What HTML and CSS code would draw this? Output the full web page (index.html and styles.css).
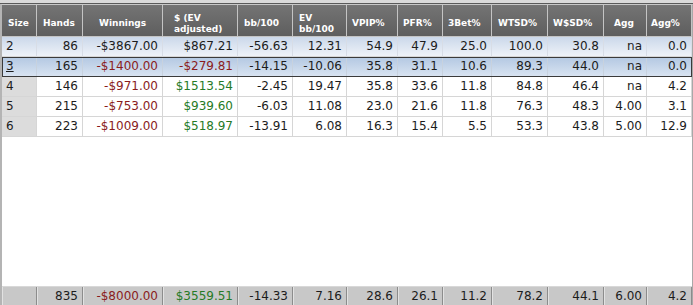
FILE: index.html
```html
<!DOCTYPE html>
<html>
<head>
<meta charset="utf-8">
<link rel="stylesheet" href="styles.css">
</head>
<body>
<div class="window">
  <div class="topbar"></div>
  <div class="grid">
    <div class="row head">
      <div class="h c-size">Size</div>
      <div class="h c-hands">Hands</div>
      <div class="h c-win">Winnings</div>
      <div class="h c-ev">$ (EV<br>adjusted)</div>
      <div class="h c-bb">bb/100</div>
      <div class="h c-evbb">EV<br>bb/100</div>
      <div class="h c-vpip">VPIP%</div>
      <div class="h c-pfr">PFR%</div>
      <div class="h c-3bet">3Bet%</div>
      <div class="h c-wtsd">WTSD%</div>
      <div class="h c-wsd">W$SD%</div>
      <div class="h c-agg">Agg</div>
      <div class="h c-aggp">Agg%</div>
    </div>
    <div class="row data sel">
      <div class="d size">2</div><div class="d">86</div><div class="d">-$3867.00</div><div class="d">$867.21</div><div class="d">-56.63</div><div class="d">12.31</div><div class="d">54.9</div><div class="d">47.9</div><div class="d">25.0</div><div class="d">100.0</div><div class="d">30.8</div><div class="d">na</div><div class="d">0.0</div>
    </div>
    <div class="row data focus">
      <div class="d size"><u>3</u></div><div class="d">165</div><div class="d neg">-$1400.00</div><div class="d neg">-$279.81</div><div class="d">-14.15</div><div class="d">-10.06</div><div class="d">35.8</div><div class="d">31.1</div><div class="d">10.6</div><div class="d">89.3</div><div class="d">44.0</div><div class="d">na</div><div class="d">0.0</div>
    </div>
    <div class="row data">
      <div class="d size">4</div><div class="d">146</div><div class="d neg">-$971.00</div><div class="d pos">$1513.54</div><div class="d">-2.45</div><div class="d">19.47</div><div class="d">35.8</div><div class="d">33.6</div><div class="d">11.8</div><div class="d">84.8</div><div class="d">46.4</div><div class="d">na</div><div class="d">4.2</div>
    </div>
    <div class="row data">
      <div class="d size">5</div><div class="d">215</div><div class="d neg">-$753.00</div><div class="d pos">$939.60</div><div class="d">-6.03</div><div class="d">11.08</div><div class="d">23.0</div><div class="d">21.6</div><div class="d">11.8</div><div class="d">76.3</div><div class="d">48.3</div><div class="d">4.00</div><div class="d">3.1</div>
    </div>
    <div class="row data">
      <div class="d size">6</div><div class="d">223</div><div class="d neg">-$1009.00</div><div class="d pos">$518.97</div><div class="d">-13.91</div><div class="d">6.08</div><div class="d">16.3</div><div class="d">15.4</div><div class="d">5.5</div><div class="d">53.3</div><div class="d">43.8</div><div class="d">5.00</div><div class="d">12.9</div>
    </div>
    <div class="spacer"></div>
    <div class="row foot">
      <div class="f"></div><div class="f">835</div><div class="f neg">-$8000.00</div><div class="f pos">$3559.51</div><div class="f">-14.33</div><div class="f">7.16</div><div class="f">28.6</div><div class="f">26.1</div><div class="f">11.2</div><div class="f">78.2</div><div class="f">44.1</div><div class="f">6.00</div><div class="f">4.2</div>
    </div>
  </div>
</div>
</body>
</html>
```
FILE: styles.css
```css
html, body {
  margin: 0;
  padding: 0;
  background: #ffffff;
}
.window {
  width: 693px;
  height: 305px;
  display: flex;
  flex-direction: column;
  font-family: "DejaVu Sans", Verdana, sans-serif;
  overflow: hidden;
}
.topbar {
  height: 3px;
  background: #dadada;
  border-bottom: 1px solid #5a5a5a;
  flex: none;
}
.grid {
  flex: 1;
  display: flex;
  flex-direction: column;
  border-left: 2px solid #b4b4b4;
  border-right: 1px solid #a8a8a8;
  border-top: 1px solid #c8c8c8;
}
.row {
  display: grid;
  grid-template-columns: 35px 46px 80px 75px 55px 54px 51px 45px 49px 56px 56px 43px 45px;
  flex: none;
}
.head {
  height: 32px;
}
.h {
  box-sizing: border-box;
  background: linear-gradient(#747474, #5e5e5e);
  border-right: 1px solid #c4c4c4;
  border-bottom: 1px solid #c4c4c4;
  color: #ffffff;
  font-weight: bold;
  font-size: 9px;
  line-height: 11px;
  display: flex;
  align-items: center;
  padding-top: 6px;
  padding-left: 5px;
  white-space: nowrap;
}
.c-size { padding-left: 6px; }
.c-hands { padding-left: 6px; }
.c-win { padding-left: 16px; }
.c-ev { padding-left: 11px; }
.c-bb { padding-left: 6px; }
.c-evbb { padding-left: 6px; }
.c-wtsd { padding-left: 6px; }
.c-agg { padding-left: 10px; }
.c-aggp { padding-left: 4px; }

.data {
  height: 20px;
}
.d {
  box-sizing: border-box;
  height: 20px;
  border-right: 1px solid #d6d6d6;
  border-bottom: 1px solid #d6d6d6;
  font-size: 12px;
  line-height: 19px;
  color: #1c1c1c;
  text-align: right;
  padding-right: 4px;
  white-space: nowrap;
}
.d.size {
  text-align: left;
  padding-left: 4px;
  background: #dcdcdc;
}
.sel .d {
  background: linear-gradient(#cbd8ea, #eef2f8);
  border-right-color: #d8dde6;
}
.sel .d.size { background: linear-gradient(#cbd8ea, #eef2f8); }
.focus {
  outline: 1px solid #3a3a3a;
  outline-offset: -1px;
}
.focus .d, .focus .d.size {
  background: linear-gradient(#b3c8e2, #d8e3f1);
  border-right-color: #c8d2de;
}
.neg { color: #8a1c1c; }
.pos { color: #267a26; }

.spacer {
  flex: 1;
}
.foot {
  height: 18px;
  border-top: 1px solid #d8d8d8;
}
.f {
  box-sizing: border-box;
  background: #c8c8c8;
  border-left: 1px solid #e2e2e2;
  border-right: 1px solid #8c8c8c;
  font-size: 12px;
  line-height: 18px;
  text-align: right;
  padding-right: 4px;
  color: #1c1c1c;
  white-space: nowrap;
}
.f.neg { color: #8a1c1c; }
.f.pos { color: #267a26; }
```
